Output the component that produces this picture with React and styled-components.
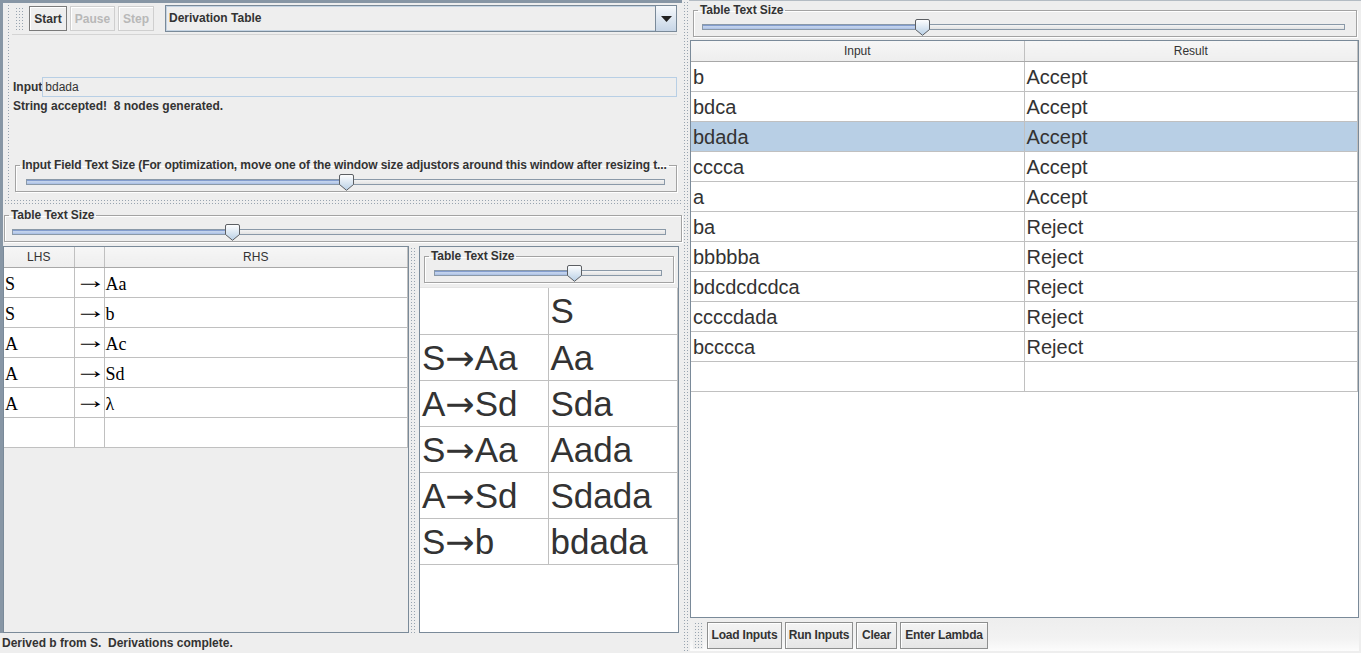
import React from 'react';
import styled, { createGlobalStyle, css } from 'styled-components';

const GlobalStyle = createGlobalStyle`
    html, body {
        margin: 0;
        padding: 0;
        background: #eeeeee;
    }
    body {
        font-family: 'Liberation Sans', Arial, sans-serif;
        color: #333333;
    }
    * {
        box-sizing: border-box;
    }
`;

const dots = css`
    background-color: #eeeeee;
    background-image:
        linear-gradient(to right, #eeeeee 2px, transparent 2px),
        linear-gradient(to bottom, #eeeeee 2px, #98a4b0 2px);
    background-size: 3px 3px;
`;

const Frame = styled.div`
    display: flex;
    width: 1361px;
    height: 653px;
    background: #eeeeee;
    overflow: hidden;
`;

const LeftPane = styled.div`
    display: flex;
    flex-direction: column;
    width: 682px;
    flex-shrink: 0;
`;

const Body = styled.div`
    display: flex;
    flex-direction: column;
    flex: 1;
    border-left: 3px solid #8796a5;
`;

const TopSection = styled.div`
    display: flex;
    height: 198px;
    border-top: 3px solid #8796a5;
`;

const EdgeDots = styled.div`
    width: 5px;
    margin-left: 3px;
    margin-right: 1px;
    ${dots}
`;

const TopContent = styled.div`
    display: flex;
    flex-direction: column;
    flex: 1;
    padding-right: 5px;
`;

const ToolBar = styled.div`
    display: flex;
    align-items: center;
    gap: 3px;
    height: 32px;
    border-bottom: 1px solid #d4d4d4;
`;

const Grip = styled.div`
    width: 11px;
    height: 25px;
    margin-left: 2px;
    margin-right: 1px;
    ${dots}
`;

const ToolButton = styled.button`
    width: ${p => p.$w}px;
    height: 25px;
    margin: 0;
    padding: 0;
    font: bold 12px 'Liberation Sans', Arial, sans-serif;
    color: ${p => (p.disabled ? '#b8b8b8' : '#333333')};
    background: #eeeeee;
    border: 1px solid ${p => (p.disabled ? '#cfcfcf' : '#7a7a7a')};
    box-shadow: inset 1px 1px 0 #ffffff;
`;

const Combo = styled.div`
    display: flex;
    flex: 1;
    height: 27px;
    margin-left: 8px;
    border: 1px solid #7a8a99;
    box-shadow: inset 0 0 0 1px #c4d3e2;
    background: #eeeeee;
`;

const ComboText = styled.div`
    flex: 1;
    padding-left: 3px;
    font-weight: bold;
    font-size: 12px;
    line-height: 24px;
    color: #333333;
`;

const ComboArrow = styled.div`
    display: flex;
    align-items: center;
    justify-content: center;
    width: 21px;
    border-left: 1px solid #7a8a99;
    background: linear-gradient(#f6f9fc, #c6d5e6);
`;

const InputRow = styled.div`
    display: flex;
    align-items: center;
    height: 20px;
    margin-top: 42px;
    padding-left: 1px;
`;

const InputLabel = styled.span`
    font-weight: bold;
    font-size: 12px;
`;

const InputField = styled.div`
    flex: 1;
    height: 20px;
    padding-left: 2px;
    border: 1px solid #b8cfe5;
    font-size: 12px;
    line-height: 18px;
    color: #333333;
`;

const Message = styled.div`
    height: 14px;
    margin-top: 2px;
    padding-left: 1px;
    font-weight: bold;
    font-size: 12px;
    line-height: 14px;
    white-space: pre;
`;

const Group = styled.fieldset`
    min-width: 0;
    margin: ${p => p.$m};
    padding: 7px 0 6px 0;
    border: 1px solid #a3a3a3;
    box-shadow: inset 1px 1px 0 #ffffff, 1px 1px 0 #ffffff;
`;

const Legend = styled.legend`
    margin-left: 4px;
    padding: 0 2px;
    font-weight: bold;
    font-size: 12px;
    line-height: 14px;
    letter-spacing: -0.1px;
    white-space: nowrap;
    color: #333333;
`;

const SliderBox = styled.div`
    position: relative;
    height: 6px;
    margin: 0 ${p => p.$r}px 0 ${p => p.$l}px;
`;

const Track = styled.div`
    height: 6px;
    border: 1px solid #8a99a8;
    background: linear-gradient(#f4f4f4, #e2e2e2);
    overflow: hidden;
`;

const Fill = styled.div`
    height: 100%;
    background: linear-gradient(#6382bf 0, #c9d8ef 40%, #a7bde4 100%);
`;

const Thumb = styled.svg`
    position: absolute;
    top: -5px;
    display: block;
`;

const HDivider = styled.div`
    height: 7px;
    ${dots}
`;

const BottomSection = styled.div`
    display: flex;
    flex-direction: column;
    flex: 1;
    min-height: 0;
`;

const SplitRow = styled.div`
    display: flex;
    flex: 1;
    min-height: 0;
    margin-top: 4px;
    padding-right: 3px;
`;

const ScrollBox = styled.div`
    width: ${p => p.$w}px;
    border: 1px solid #7a8a99;
    background: #eeeeee;
    overflow: hidden;
`;

const DerivBox = styled.div`
    flex: 1;
    margin-top: 4px;
    border-top: 1px solid #e4e4e4;
    background: #ffffff;
    overflow: hidden;
`;

const VSplit = styled.div`
    width: 10px;
    padding: 0 2px;
    background-clip: content-box;
    ${dots}
`;

const DerivPanel = styled.div`
    display: flex;
    flex-direction: column;
    flex: 1;
    border: 1px solid #7a8a99;
    background: #eeeeee;
`;

const Table = styled.table`
    width: 100%;
    table-layout: fixed;
    border-collapse: collapse;
    border-spacing: 0;
`;

const HeadCell = styled.th`
    height: 20px;
    padding: 0 0 3px 0;
    vertical-align: bottom;
    background: linear-gradient(#f6f6f6, #eeeeee);
    border-right: 1px solid #c0c0c0;
    border-bottom: 1px solid #a8a8a8;
    font-weight: normal;
    font-size: 12px;
    line-height: 14px;
    color: #333333;
    text-align: center;
`;

const Row = styled.tr`
    background: ${p => (p.$selected ? '#b8cfe5' : '#ffffff')};
`;

const RuleCell = styled.td`
    height: 30px;
    padding: 3px 0 0 1px;
    border-right: 1px solid #c0c0c0;
    border-bottom: 1px solid #c0c0c0;
    font-family: 'Liberation Serif', 'Times New Roman', serif;
    font-size: 18px;
    line-height: 26px;
    color: #000000;
    white-space: nowrap;
    overflow: hidden;
`;

const ArrowCell = styled(RuleCell)`
    padding-left: 0;
    overflow: visible;
`;

const LongArrow = styled.span`
    display: inline-block;
    line-height: 0;
    transform: translate(-1px, -4px) scale(1.8, 1.3);
    transform-origin: left center;
`;

const DerivCell = styled.td`
    height: 46px;
    padding: 0 0 0 2px;
    border-right: 1px solid #c0c0c0;
    border-bottom: 1px solid #c0c0c0;
    font-size: 35px;
    line-height: 45px;
    color: #333333;
    white-space: nowrap;
    overflow: hidden;
`;

const Arrow = styled.span`
    font-family: 'DejaVu Sans', sans-serif;
    line-height: 0;
`;

const ResultCell = styled.td`
    height: 30px;
    padding: 1px 0 0 2px;
    border-right: 1px solid #c0c0c0;
    border-bottom: 1px solid #c0c0c0;
    font-size: 20px;
    line-height: 28px;
    color: #333333;
    white-space: nowrap;
`;

const StatusBar = styled.div`
    height: 20px;
    padding-left: 2px;
    font-weight: bold;
    font-size: 12px;
    line-height: 20px;
    white-space: pre;
`;

const VDivider = styled.div`
    width: 7px;
    flex-shrink: 0;
    padding: 0 1px;
    background-clip: content-box;
    ${dots}
`;

const RightPane = styled.div`
    display: flex;
    flex-direction: column;
    flex: 1;
    border-top: 1px solid #b4bcc4;
`;

const ResultBox = styled.div`
    flex: 1;
    margin: 3px 2px 0 1px;
    border: 1px solid #7a8a99;
    background: #ffffff;
    overflow: hidden;
`;

const BottomBar = styled.div`
    display: flex;
    align-items: center;
    gap: 3px;
    height: 32px;
    margin: 1px 2px 2px 1px;
    padding-left: 3px;
    background: linear-gradient(#eeeeee 0, #f2f2f2 60%, #fcfcfc 100%);
`;

const BarGrip = styled.div`
    width: 10px;
    height: 28px;
    margin-right: 1px;
    ${dots}
`;

const BarButton = styled.button`
    width: ${p => p.$w}px;
    height: 27px;
    margin: 0;
    padding: 0;
    font: bold 12px 'Liberation Sans', Arial, sans-serif;
    letter-spacing: -0.2px;
    white-space: nowrap;
    color: #333333;
    background: linear-gradient(#f4f4f4, #e6e6e6);
    border: 1px solid #8e8f8f;
    box-shadow: inset 1px 1px 0 #ffffff;
`;

const Slider = ({ value, id, l, r }) => (
    <SliderBox $l={l} $r={r}>
        <Track>
            <Fill style={{ width: `${value * 100}%` }} />
        </Track>
        <Thumb style={{ left: `calc(${value * 100}% - 7px)` }} width='15' height='17' viewBox='0 0 15 17'>
            <defs>
                <linearGradient id={id} x1='0' y1='0' x2='0' y2='1'>
                    <stop offset='0' stopColor='#ffffff' />
                    <stop offset='1' stopColor='#b8cfe5' />
                </linearGradient>
            </defs>
            <path d='M2 0.5 H13 Q14.5 0.5 14.5 2 V10.5 L7.5 16.3 L0.5 10.5 V2 Q0.5 0.5 2 0.5 Z' fill={`url(#${id})`} stroke='#5c5f63' />
        </Thumb>
    </SliderBox>
);

const rules = [
    ['S', 'Aa'],
    ['S', 'b'],
    ['A', 'Ac'],
    ['A', 'Sd'],
    ['A', 'λ'],
];

const derivations = [
    ['', '', 'S'],
    ['S', 'Aa', 'Aa'],
    ['A', 'Sd', 'Sda'],
    ['S', 'Aa', 'Aada'],
    ['A', 'Sd', 'Sdada'],
    ['S', 'b', 'bdada'],
];

const results = [
    ['b', 'Accept'],
    ['bdca', 'Accept'],
    ['bdada', 'Accept'],
    ['cccca', 'Accept'],
    ['a', 'Accept'],
    ['ba', 'Reject'],
    ['bbbbba', 'Reject'],
    ['bdcdcdcdca', 'Reject'],
    ['ccccdada', 'Reject'],
    ['bcccca', 'Reject'],
    ['', ''],
];

export default function App() {
    return (
        <>
            <GlobalStyle />
            <Frame>
                <LeftPane>
                    <Body>
                        <TopSection>
                            <EdgeDots />
                            <TopContent>
                                <ToolBar>
                                    <Grip />
                                    <ToolButton $w={38}>Start</ToolButton>
                                    <ToolButton $w={45} disabled>Pause</ToolButton>
                                    <ToolButton $w={36} disabled>Step</ToolButton>
                                    <Combo>
                                        <ComboText>Derivation Table</ComboText>
                                        <ComboArrow>
                                            <svg width='11' height='6' viewBox='0 0 11 6'>
                                                <path d='M0 0 H11 L5.5 6 Z' fill='#222222' />
                                            </svg>
                                        </ComboArrow>
                                    </Combo>
                                </ToolBar>
                                <InputRow>
                                    <InputLabel>Input</InputLabel>
                                    <InputField>bdada</InputField>
                                </InputRow>
                                <Message>String accepted!  8 nodes generated.</Message>
                                <Group $m='45px 0 0 3px'>
                                    <Legend>Input Field Text Size (For optimization, move one of the window size adjustors around this window after resizing t...</Legend>
                                    <Slider value={0.5} id='g1' l={10} r={11} />
                                </Group>
                            </TopContent>
                        </TopSection>
                        <HDivider />
                        <BottomSection>
                            <Group $m='3px 0 0 1px'>
                                <Legend>Table Text Size</Legend>
                                <Slider value={0.336} id='g2' l={7} r={15} />
                            </Group>
                            <SplitRow>
                                <ScrollBox $w={406}>
                                    <Table>
                                        <colgroup>
                                            <col style={{ width: 70 }} />
                                            <col style={{ width: 30 }} />
                                            <col />
                                        </colgroup>
                                        <thead>
                                            <tr>
                                                <HeadCell>LHS</HeadCell>
                                                <HeadCell></HeadCell>
                                                <HeadCell>RHS</HeadCell>
                                            </tr>
                                        </thead>
                                        <tbody>
                                            {rules.map(([lhs, rhs], i) => (
                                                <Row key={i}>
                                                    <RuleCell>{lhs}</RuleCell>
                                                    <ArrowCell><LongArrow>→</LongArrow></ArrowCell>
                                                    <RuleCell>{rhs}</RuleCell>
                                                </Row>
                                            ))}
                                            <Row>
                                                <RuleCell></RuleCell>
                                                <RuleCell></RuleCell>
                                                <RuleCell></RuleCell>
                                            </Row>
                                        </tbody>
                                    </Table>
                                </ScrollBox>
                                <VSplit />
                                <DerivPanel>
                                    <Group $m='2px 4px 0 4px'>
                                        <Legend>Table Text Size</Legend>
                                        <Slider value={0.614} id='g3' l={9} r={11} />
                                    </Group>
                                    <DerivBox>
                                        <Table>
                                            <colgroup>
                                                <col style={{ width: 128 }} />
                                                <col />
                                            </colgroup>
                                            <tbody>
                                                {derivations.map(([from, to, form], i) => (
                                                    <Row key={i}>
                                                        <DerivCell>
                                                            {from && (
                                                                <>
                                                                    {from}<Arrow>→</Arrow>{to}
                                                                </>
                                                            )}
                                                        </DerivCell>
                                                        <DerivCell>{form}</DerivCell>
                                                    </Row>
                                                ))}
                                            </tbody>
                                        </Table>
                                    </DerivBox>
                                </DerivPanel>
                            </SplitRow>
                        </BottomSection>
                    </Body>
                    <StatusBar>Derived b from S.  Derivations complete.</StatusBar>
                </LeftPane>
                <VDivider />
                <RightPane>
                    <Group $m='2px 4px 0 4px'>
                        <Legend>Table Text Size</Legend>
                        <Slider value={0.342} id='g4' l={8} r={11} />
                    </Group>
                    <ResultBox>
                        <Table>
                            <colgroup>
                                <col style={{ width: 333 }} />
                                <col />
                            </colgroup>
                            <thead>
                                <tr>
                                    <HeadCell>Input</HeadCell>
                                    <HeadCell>Result</HeadCell>
                                </tr>
                            </thead>
                            <tbody>
                                {results.map(([input, result], i) => (
                                    <Row key={i} $selected={i === 2}>
                                        <ResultCell>{input}</ResultCell>
                                        <ResultCell>{result}</ResultCell>
                                    </Row>
                                ))}
                            </tbody>
                        </Table>
                    </ResultBox>
                    <BottomBar>
                        <BarGrip />
                        <BarButton $w={75}>Load Inputs</BarButton>
                        <BarButton $w={68}>Run Inputs</BarButton>
                        <BarButton $w={41}>Clear</BarButton>
                        <BarButton $w={88}>Enter Lambda</BarButton>
                    </BottomBar>
                </RightPane>
            </Frame>
        </>
    );
}
